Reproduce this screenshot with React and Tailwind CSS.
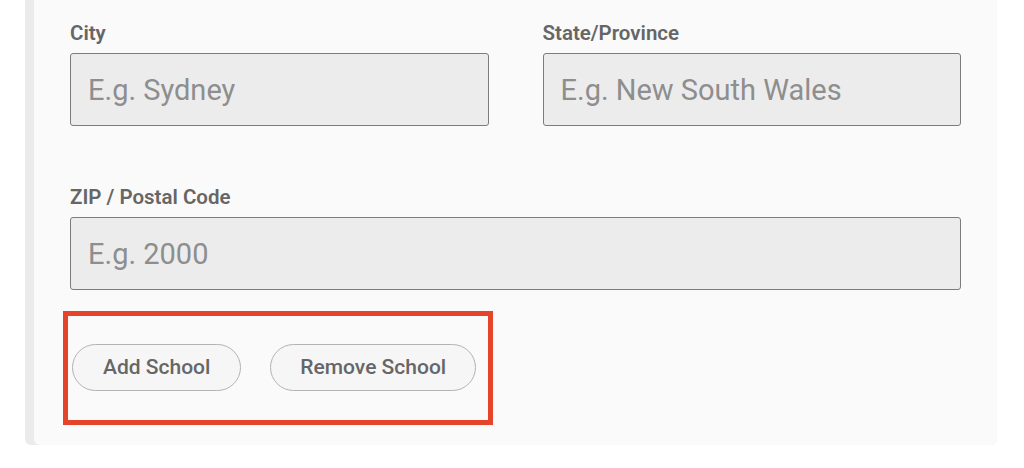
import { useState } from "react";

function Field({ label, placeholder, className = "" }) {
  const [value, setValue] = useState("");
  return (
    <label className={`flex flex-col ${className}`}>
      <span className="text-[20.5px] font-semibold leading-6 text-[#666666]">{label}</span>
      <input
        value={value}
        onChange={(e) => setValue(e.target.value)}
        placeholder={placeholder}
        className="mt-2 h-[73px] w-full rounded-[3px] border border-[#7c7c7c] bg-[#ececec] px-[17px] text-[29px] text-[#555] outline-none placeholder:text-[#8e8e8e]"
      />
    </label>
  );
}

export default function App() {
  return (
    <div className="min-h-[468px] bg-white pl-[25px] pr-[27px] font-['Roboto',sans-serif]">
      <div className="rounded-b-md bg-[#ebebeb] pl-[9px]">
        <div className="rounded-b-md bg-[#fafafa] pb-[20px] pl-[36px] pr-[36px] pt-[21px]">
          <div className="grid grid-cols-2 gap-x-[54px]">
            <Field label="City" placeholder="E.g. Sydney" />
            <Field label="State/Province" placeholder="E.g. New South Wales" />
          </div>
          <Field label="ZIP / Postal Code" placeholder="E.g. 2000" className="mt-[59px]" />
          <div className="-ml-[7px] mt-[21px] flex w-[430px] items-center gap-[29px] border-[5px] border-[#e6432b] pb-[29px] pl-[4px] pt-[28px]">
            <button className="h-[47px] rounded-full border border-[#b3b3b3] bg-[#f6f6f6] px-[30px] text-[21px] font-medium text-[#666666]">
              Add School
            </button>
            <button className="h-[47px] rounded-full border border-[#b3b3b3] bg-[#f6f6f6] px-[29px] text-[21px] font-medium text-[#666666]">
              Remove School
            </button>
          </div>
        </div>
      </div>
    </div>
  );
}
